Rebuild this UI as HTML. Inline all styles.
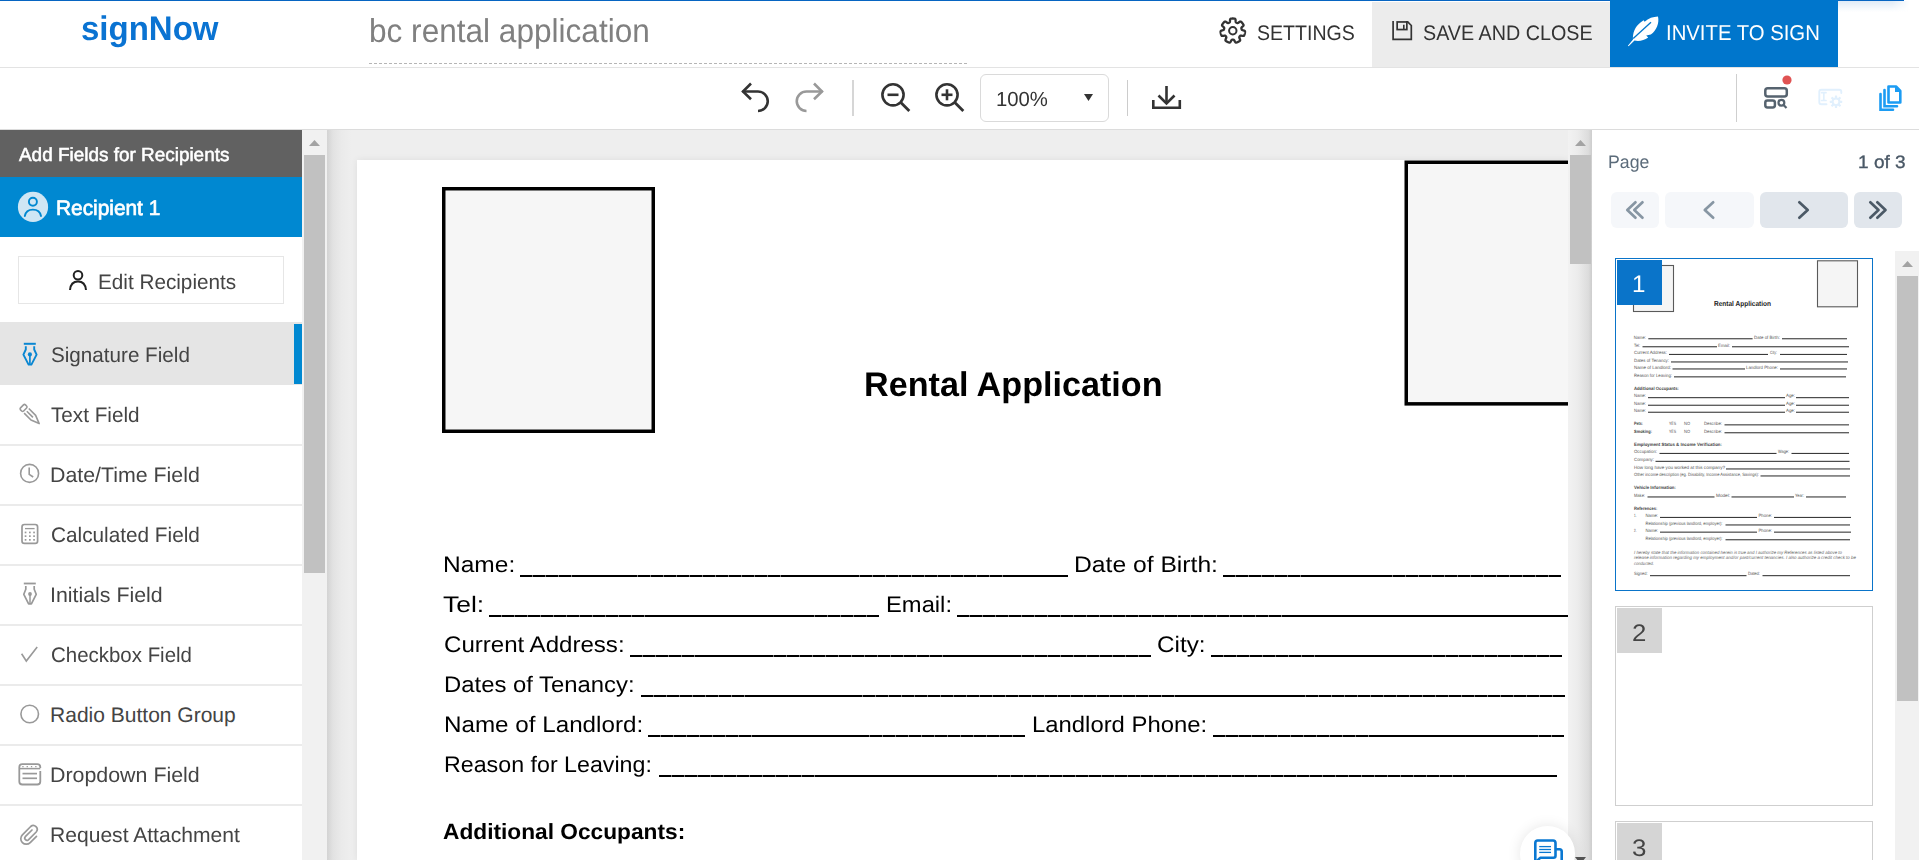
<!DOCTYPE html>
<html><head><meta charset="utf-8"><title>signNow</title>
<style>
html,body{margin:0;padding:0;}
body{width:1919px;height:860px;overflow:hidden;position:relative;background:#fff;font-family:"Liberation Sans",sans-serif;text-rendering:geometricPrecision;}
div,span,svg{position:absolute;box-sizing:border-box;}
.t{white-space:nowrap;transform-origin:0 0;}
.ul{height:1.8px;background:repeating-linear-gradient(to right,#000 0,#000 12.2px,#777 12.2px,#777 13px);}
.sep{left:0;width:302px;height:2px;background:#ebebeb;}
</style></head><body>
<!-- ===== header ===== -->
<div style="left:0;top:0;width:1919px;height:67px;background:#fff"></div>
<div style="left:1838px;top:1px;width:72px;height:11px;background:linear-gradient(#dfebf7,#f1f6fb 55%,rgba(255,255,255,0));-webkit-mask-image:linear-gradient(to right,#000 75%,transparent);"></div>
<div style="left:0;top:0;width:1904px;height:1px;background:#0765c2"></div>
<div style="left:0;top:67px;width:1919px;height:1px;background:#e3e3e3"></div>
<svg style="left:369px;top:62px" width="601" height="3"><line x1="0" y1="1.5" x2="600" y2="1.5" stroke="#b5b5b5" stroke-width="1" stroke-dasharray="3 2"/></svg>
<div style="left:1372px;top:2px;width:238px;height:65px;background:#ececec"></div>
<div style="left:1610px;top:0;width:228px;height:67px;background:#0076cc"></div>
<!-- gear -->
<svg style="left:1219px;top:17px" width="28" height="28" viewBox="0 0 28 28"><path d="M25.61 13.80 L25.89 14.07 L26.00 14.35 L26.04 14.63 L26.04 14.90 L26.02 15.18 L25.99 15.45 L25.95 15.72 L25.90 16.00 L25.85 16.27 L25.79 16.54 L25.73 16.81 L25.66 17.07 L25.58 17.34 L25.50 17.60 L25.40 17.86 L25.30 18.12 L25.18 18.37 L25.03 18.60 L24.81 18.80 L24.44 18.92 L23.85 18.92 L23.07 18.79 L22.35 18.65 L21.84 18.61 L21.53 18.65 L21.31 18.76 L21.15 18.89 L21.01 19.04 L20.88 19.19 L20.76 19.35 L20.63 19.51 L20.52 19.67 L20.40 19.84 L20.31 20.02 L20.25 20.25 L20.28 20.57 L20.43 21.06 L20.73 21.73 L21.03 22.46 L21.16 23.03 L21.13 23.42 L20.98 23.68 L20.78 23.88 L20.57 24.05 L20.34 24.21 L20.11 24.36 L19.87 24.50 L19.63 24.63 L19.38 24.76 L19.14 24.88 L18.89 25.00 L18.63 25.11 L18.38 25.21 L18.12 25.31 L17.86 25.40 L17.60 25.48 L17.33 25.55 L17.05 25.57 L16.75 25.53 L16.43 25.32 L16.06 24.85 L15.68 24.16 L15.34 23.51 L15.06 23.09 L14.82 22.87 L14.61 22.77 L14.40 22.73 L14.20 22.71 L14.00 22.70 L13.80 22.70 L13.60 22.70 L13.40 22.71 L13.20 22.73 L12.99 22.77 L12.78 22.87 L12.54 23.09 L12.26 23.51 L11.92 24.16 L11.54 24.85 L11.17 25.32 L10.85 25.53 L10.55 25.57 L10.27 25.55 L10.00 25.48 L9.74 25.40 L9.48 25.31 L9.22 25.21 L8.97 25.11 L8.71 25.00 L8.46 24.88 L8.22 24.76 L7.97 24.63 L7.73 24.50 L7.49 24.36 L7.26 24.21 L7.03 24.05 L6.82 23.88 L6.62 23.68 L6.47 23.42 L6.44 23.03 L6.57 22.46 L6.87 21.73 L7.17 21.06 L7.32 20.57 L7.35 20.25 L7.29 20.02 L7.20 19.84 L7.08 19.67 L6.97 19.51 L6.84 19.35 L6.72 19.19 L6.59 19.04 L6.45 18.89 L6.29 18.76 L6.07 18.65 L5.76 18.61 L5.25 18.65 L4.53 18.79 L3.75 18.92 L3.16 18.92 L2.79 18.80 L2.57 18.60 L2.42 18.37 L2.30 18.12 L2.20 17.86 L2.10 17.60 L2.02 17.34 L1.94 17.07 L1.87 16.81 L1.81 16.54 L1.75 16.27 L1.70 16.00 L1.65 15.72 L1.61 15.45 L1.58 15.18 L1.56 14.90 L1.56 14.63 L1.60 14.35 L1.71 14.07 L1.99 13.80 L2.53 13.55 L3.28 13.33 L3.99 13.14 L4.47 12.96 L4.73 12.78 L4.88 12.59 L4.96 12.40 L5.03 12.21 L5.08 12.01 L5.12 11.82 L5.17 11.62 L5.20 11.43 L5.23 11.23 L5.24 11.02 L5.19 10.79 L5.03 10.51 L4.68 10.14 L4.12 9.66 L3.53 9.14 L3.16 8.68 L3.03 8.31 L3.04 8.01 L3.13 7.75 L3.25 7.50 L3.39 7.26 L3.54 7.03 L3.69 6.80 L3.85 6.57 L4.01 6.35 L4.18 6.13 L4.36 5.92 L4.54 5.71 L4.72 5.50 L4.91 5.30 L5.11 5.11 L5.31 4.92 L5.53 4.75 L5.76 4.60 L6.05 4.52 L6.44 4.57 L6.97 4.83 L7.61 5.28 L8.20 5.72 L8.64 5.98 L8.95 6.07 L9.18 6.07 L9.39 6.02 L9.57 5.95 L9.76 5.87 L9.94 5.78 L10.12 5.69 L10.30 5.60 L10.47 5.50 L10.64 5.37 L10.79 5.19 L10.90 4.89 L10.97 4.39 L11.00 3.65 L11.04 2.87 L11.17 2.28 L11.37 1.95 L11.62 1.78 L11.88 1.69 L12.15 1.63 L12.42 1.58 L12.70 1.55 L12.97 1.53 L13.25 1.51 L13.52 1.50 L13.80 1.50 L14.08 1.50 L14.35 1.51 L14.63 1.53 L14.90 1.55 L15.18 1.58 L15.45 1.63 L15.72 1.69 L15.98 1.78 L16.23 1.95 L16.43 2.28 L16.56 2.87 L16.60 3.65 L16.63 4.39 L16.70 4.89 L16.81 5.19 L16.96 5.37 L17.13 5.50 L17.30 5.60 L17.48 5.69 L17.66 5.78 L17.84 5.87 L18.03 5.95 L18.21 6.02 L18.42 6.07 L18.65 6.07 L18.96 5.98 L19.40 5.72 L19.99 5.28 L20.63 4.83 L21.16 4.57 L21.55 4.52 L21.84 4.60 L22.07 4.75 L22.29 4.92 L22.49 5.11 L22.69 5.30 L22.88 5.50 L23.06 5.71 L23.24 5.92 L23.42 6.13 L23.59 6.35 L23.75 6.57 L23.91 6.80 L24.06 7.03 L24.21 7.26 L24.35 7.50 L24.47 7.75 L24.56 8.01 L24.57 8.31 L24.44 8.68 L24.07 9.14 L23.48 9.66 L22.92 10.14 L22.57 10.51 L22.41 10.79 L22.36 11.02 L22.37 11.23 L22.40 11.43 L22.43 11.62 L22.48 11.82 L22.52 12.01 L22.57 12.21 L22.64 12.40 L22.72 12.59 L22.87 12.78 L23.13 12.96 L23.61 13.14 L24.32 13.33 L25.07 13.55Z" fill="none" stroke="#333" stroke-width="2.3" stroke-linejoin="round"/><circle cx="13.8" cy="13.8" r="3.7" fill="none" stroke="#333" stroke-width="2"/></svg>
<!-- floppy -->
<svg style="left:1385px;top:14px" width="35" height="34" viewBox="0 0 35 34"><path d="M8.1 7.1 V25.4 H26.3 V11.5 L22.7 7.95 H21" fill="none" stroke="#333" stroke-width="1.7"/><rect x="12.15" y="7.95" width="9.7" height="7.6" fill="none" stroke="#333" stroke-width="1.7"/><line x1="18.8" y1="10.8" x2="18.8" y2="15" stroke="#333" stroke-width="1.6"/></svg>
<!-- feather -->
<svg style="left:1620px;top:10px" width="50" height="40" viewBox="0 0 50 40"><path d="M38 6.5 C39.5 13 36.5 20.5 30.8 24.6 L26.2 25.6 L28.2 27.6 C24 30.8 18.5 31.6 14.5 30.6 L8.6 36.3 L7.9 35.8 L13 29.6 C12.4 23.6 15 16.6 20.5 12.6 L23.6 10.3 L24.6 11.8 C28.6 8.3 33 6.6 38 6.5 Z" fill="#fff"/><path d="M13.2 28.6 L31 12.3" stroke="#0076cc" stroke-width="1.3"/></svg>
<!-- ===== toolbar ===== -->
<div style="left:0;top:129px;width:1919px;height:1px;background:#dcdcdc"></div>
<svg style="left:738px;top:80px" width="90" height="36" viewBox="738 80 90 36"><path d="M742.5 91.5 H758 A9.7 9.7 0 0 1 758 111" fill="none" stroke="#333" stroke-width="2.6"/><path d="M751 83.5 L743 91.5 L751 99.3" fill="none" stroke="#333" stroke-width="2.6"/><path d="M822.5 91.5 H806.5 A9.7 9.7 0 0 0 806.5 111" fill="none" stroke="#999" stroke-width="2.6"/><path d="M814 83.5 L822 91.5 L814 99.3" fill="none" stroke="#999" stroke-width="2.6"/></svg>
<div style="left:852px;top:80px;width:2px;height:36px;background:#d6d6d6"></div>
<svg style="left:876px;top:78px" width="94" height="38" viewBox="876 78 94 38"><circle cx="893" cy="94.8" r="10.6" fill="none" stroke="#333" stroke-width="2.6"/><line x1="887.5" y1="94.8" x2="898.5" y2="94.8" stroke="#333" stroke-width="2.6"/><line x1="900.8" y1="102.6" x2="909.3" y2="111.1" stroke="#333" stroke-width="2.8"/><circle cx="947" cy="94.8" r="10.6" fill="none" stroke="#333" stroke-width="2.6"/><line x1="941.5" y1="94.8" x2="952.5" y2="94.8" stroke="#333" stroke-width="2.6"/><line x1="947" y1="89.3" x2="947" y2="100.3" stroke="#333" stroke-width="2.6"/><line x1="954.8" y1="102.6" x2="963.3" y2="111.1" stroke="#333" stroke-width="2.8"/></svg>
<div style="left:980px;top:74px;width:129px;height:48px;border:1px solid #dadada;border-radius:6px;background:#fff"></div>
<svg style="left:1082px;top:92px" width="14" height="12"><path d="M2 2 H11 L6.5 9 Z" fill="#333"/></svg>
<div style="left:1127px;top:80px;width:1px;height:36px;background:#cccccc"></div>
<svg style="left:1150px;top:84px" width="34" height="27" viewBox="1150 84 34 27"><path d="M1153.3 100 V107.7 H1179.8 V100" fill="none" stroke="#333" stroke-width="2.6"/><line x1="1166.5" y1="86" x2="1166.5" y2="103" stroke="#333" stroke-width="2.6"/><path d="M1158.5 95.5 L1166.5 103.5 L1174.5 95.5" fill="none" stroke="#333" stroke-width="2.6"/></svg>
<div style="left:1736px;top:74px;width:1px;height:48px;background:#cfcfcf"></div>
<svg style="left:1760px;top:74px" width="36" height="38" viewBox="1760 74 36 38"><rect x="1765.3" y="88.3" width="21.5" height="8.2" rx="2.5" fill="none" stroke="#56636f" stroke-width="2.5"/><rect x="1765.3" y="100.4" width="9.6" height="7" rx="2.2" fill="none" stroke="#56636f" stroke-width="2.5"/><circle cx="1781.4" cy="102.7" r="2.9" fill="none" stroke="#56636f" stroke-width="2.2"/><line x1="1783.6" y1="105" x2="1786.5" y2="108" stroke="#56636f" stroke-width="2.2"/><circle cx="1787" cy="80" r="4.6" fill="#e05353"/></svg>
<svg style="left:1812px;top:84px" width="34" height="26" viewBox="1812 84 34 26"><path d="M1826.5 104.2 H1821.3 A2 2 0 0 1 1819.3 102.2 V91.8 A2 2 0 0 1 1821.3 89.8 H1839.3 A2 2 0 0 1 1841.3 91.8 V93" fill="none" stroke="#e1f0fd" stroke-width="1.9" stroke-linecap="round"/><path d="M1821.6 92.7 H1826 M1823.8 92.7 V100.5 M1821.6 100.5 H1826" fill="none" stroke="#e1f0fd" stroke-width="1.7" stroke-linecap="round"/><path d="M1842.30 101.80 L1842.29 102.05 L1842.28 102.29 L1842.24 102.54 L1842.13 102.77 L1841.73 102.94 L1840.85 102.96 L1840.31 103.02 L1840.14 103.14 L1840.05 103.30 L1839.99 103.45 L1839.92 103.61 L1839.88 103.77 L1839.91 103.99 L1840.25 104.40 L1840.85 105.04 L1841.03 105.45 L1840.93 105.69 L1840.79 105.89 L1840.63 106.08 L1840.45 106.25 L1840.28 106.43 L1840.09 106.59 L1839.89 106.73 L1839.65 106.83 L1839.24 106.65 L1838.60 106.05 L1838.19 105.71 L1837.97 105.68 L1837.81 105.72 L1837.65 105.79 L1837.50 105.85 L1837.34 105.94 L1837.22 106.11 L1837.16 106.65 L1837.14 107.53 L1836.97 107.93 L1836.74 108.04 L1836.49 108.08 L1836.25 108.09 L1836.00 108.10 L1835.75 108.09 L1835.51 108.08 L1835.26 108.04 L1835.03 107.93 L1834.86 107.53 L1834.84 106.65 L1834.78 106.11 L1834.66 105.94 L1834.50 105.85 L1834.35 105.79 L1834.19 105.72 L1834.03 105.68 L1833.81 105.71 L1833.40 106.05 L1832.76 106.65 L1832.35 106.83 L1832.11 106.73 L1831.91 106.59 L1831.72 106.43 L1831.55 106.25 L1831.37 106.08 L1831.21 105.89 L1831.07 105.69 L1830.97 105.45 L1831.15 105.04 L1831.75 104.40 L1832.09 103.99 L1832.12 103.77 L1832.08 103.61 L1832.01 103.45 L1831.95 103.30 L1831.86 103.14 L1831.69 103.02 L1831.15 102.96 L1830.27 102.94 L1829.87 102.77 L1829.76 102.54 L1829.72 102.29 L1829.71 102.05 L1829.70 101.80 L1829.71 101.55 L1829.72 101.31 L1829.76 101.06 L1829.87 100.83 L1830.27 100.66 L1831.15 100.64 L1831.69 100.58 L1831.86 100.46 L1831.95 100.30 L1832.01 100.15 L1832.08 99.99 L1832.12 99.83 L1832.09 99.61 L1831.75 99.20 L1831.15 98.56 L1830.97 98.15 L1831.07 97.91 L1831.21 97.71 L1831.37 97.52 L1831.55 97.35 L1831.72 97.17 L1831.91 97.01 L1832.11 96.87 L1832.35 96.77 L1832.76 96.95 L1833.40 97.55 L1833.81 97.89 L1834.03 97.92 L1834.19 97.88 L1834.35 97.81 L1834.50 97.75 L1834.66 97.66 L1834.78 97.49 L1834.84 96.95 L1834.86 96.07 L1835.03 95.67 L1835.26 95.56 L1835.51 95.52 L1835.75 95.51 L1836.00 95.50 L1836.25 95.51 L1836.49 95.52 L1836.74 95.56 L1836.97 95.67 L1837.14 96.07 L1837.16 96.95 L1837.22 97.49 L1837.34 97.66 L1837.50 97.75 L1837.65 97.81 L1837.81 97.88 L1837.97 97.92 L1838.19 97.89 L1838.60 97.55 L1839.24 96.95 L1839.65 96.77 L1839.89 96.87 L1840.09 97.01 L1840.28 97.17 L1840.45 97.35 L1840.63 97.52 L1840.79 97.71 L1840.93 97.91 L1841.03 98.15 L1840.85 98.56 L1840.25 99.20 L1839.91 99.61 L1839.88 99.83 L1839.92 99.99 L1839.99 100.15 L1840.05 100.30 L1840.14 100.46 L1840.31 100.58 L1840.85 100.64 L1841.73 100.66 L1842.13 100.83 L1842.24 101.06 L1842.28 101.31 L1842.29 101.55Z M1838.4 101.8 A2.4 2.4 0 1 0 1833.6 101.8 A2.4 2.4 0 1 0 1838.4 101.8 Z" fill="#e1f0fd" fill-rule="evenodd"/></svg>
<svg style="left:1876px;top:83px" width="28" height="30" viewBox="1876 83 28 30"><path d="M1888.5 86.5 H1896 L1900.3 91 V102.5 H1888.5 Z" fill="none" stroke="#1c9cf3" stroke-width="2.6" stroke-linejoin="round"/><path d="M1895 86.5 V92 H1900.3 Z" fill="#1c9cf3"/><path d="M1884.5 90 V106.2 H1897" fill="none" stroke="#1c9cf3" stroke-width="2.6" stroke-linecap="round"/><path d="M1880.5 94 V109.7 H1893" fill="none" stroke="#1c9cf3" stroke-width="2.6" stroke-linecap="round"/></svg>
<!-- ===== left panel ===== -->
<div style="left:0;top:130px;width:302px;height:47px;background:#616161"></div>
<div style="left:0;top:177px;width:302px;height:60px;background:#0088d1"></div>
<svg style="left:17px;top:191px" width="33" height="33" viewBox="17 191 33 33"><circle cx="33" cy="206.9" r="15.1" fill="#cfe6f4"/><circle cx="32.9" cy="201.7" r="4" fill="none" stroke="#0088d1" stroke-width="1.9"/><path d="M24.8 216 C25.6 211.6 29 209.6 32.9 209.6 C36.8 209.6 40.2 211.6 41 216" fill="none" stroke="#0088d1" stroke-width="1.9" stroke-linecap="round"/></svg>
<div style="left:18px;top:256px;width:266px;height:48px;border:1px solid #e6e6e6;background:#fff"></div>
<svg style="left:66px;top:268px" width="24" height="24" viewBox="66 268 24 24"><circle cx="78" cy="275.2" r="4.3" fill="none" stroke="#222" stroke-width="2"/><path d="M70 290 C70.5 284 74 281.5 78 281.5 C82 281.5 85.5 284 86 290" fill="none" stroke="#222" stroke-width="2"/></svg>
<div style="left:0;top:322px;width:302px;height:63px;background:#e5e5e5"></div>
<div style="left:294px;top:324px;width:8px;height:60px;background:#0088d1"></div>
<div class="sep" style="top:444px"></div>
<div class="sep" style="top:504px"></div>
<div class="sep" style="top:564px"></div>
<div class="sep" style="top:624px"></div>
<div class="sep" style="top:684px"></div>
<div class="sep" style="top:744px"></div>
<div class="sep" style="top:804px"></div>
<!-- nib signature -->
<svg style="left:20px;top:340px" width="20" height="28" viewBox="20 340 20 28"><line x1="23.8" y1="343.8" x2="35.8" y2="343.8" stroke="#0a87d2" stroke-width="2"/><path d="M25.8 346.3 V349.5 L23.4 354.6 L28.6 364.6 H31.4 L36.6 354.6 L34.2 349.5 V346.3" fill="none" stroke="#0a87d2" stroke-width="1.9" stroke-linejoin="round"/><circle cx="29.9" cy="354.4" r="2.1" fill="#0a87d2"/><line x1="29.9" y1="354.5" x2="29.9" y2="364" stroke="#0a87d2" stroke-width="1.7"/></svg>
<!-- pencil -->
<svg style="left:16px;top:400px" width="28" height="28" viewBox="16 400 28 28"><g transform="translate(22 406.4) rotate(45)" fill="none" stroke="#999" stroke-width="1.6" stroke-linejoin="round"><rect x="0" y="-3.5" width="4.4" height="7" rx="1.4"/><path d="M6.3 -3.3 H16 L24.3 0 L16 3.3 H6.3"/><line x1="6.8" y1="0" x2="15.5" y2="0"/></g></svg>
<!-- clock -->
<svg style="left:18px;top:462px" width="24" height="24" viewBox="18 462 24 24"><circle cx="29.6" cy="473.4" r="9" fill="none" stroke="#999" stroke-width="1.6"/><path d="M29.2 467.5 V474.3 L33.2 477" fill="none" stroke="#999" stroke-width="1.6"/></svg>
<!-- calculator -->
<svg style="left:19px;top:521px" width="22" height="26" viewBox="19 521 22 26"><rect x="22" y="524.5" width="15.6" height="18.8" rx="2.4" fill="none" stroke="#999" stroke-width="1.7"/><line x1="25" y1="528.6" x2="34.6" y2="528.6" stroke="#999" stroke-width="1.3"/><g fill="#999"><rect x="24.7" y="531.6" width="1.7" height="1.7"/><rect x="29" y="531.6" width="1.7" height="1.7"/><rect x="33.2" y="531.6" width="1.7" height="1.7"/><rect x="24.7" y="535.3" width="1.7" height="1.7"/><rect x="29" y="535.3" width="1.7" height="1.7"/><rect x="33.2" y="535.3" width="1.7" height="1.7"/><rect x="24.7" y="539" width="1.7" height="1.7"/><rect x="29" y="539" width="1.7" height="1.7"/><rect x="33.2" y="539" width="1.7" height="1.7"/></g></svg>
<!-- nib initials -->
<svg style="left:20px;top:580px" width="20" height="28" viewBox="20 580 20 28"><line x1="23.8" y1="583.5" x2="35.8" y2="583.5" stroke="#999" stroke-width="1.8"/><path d="M25.8 586 V589.3 L23.8 594.3 L28.6 603.8 H31.4 L36.2 594.3 L34.2 589.3 V586" fill="none" stroke="#999" stroke-width="1.7" stroke-linejoin="round"/><circle cx="30" cy="594" r="1.9" fill="#999"/><line x1="30" y1="594" x2="30" y2="603" stroke="#999" stroke-width="1.5"/></svg>
<!-- check -->
<svg style="left:18px;top:643px" width="24" height="22" viewBox="18 643 24 22"><path d="M21.6 653.8 L26.3 661 L37.2 647" fill="none" stroke="#999" stroke-width="1.6"/></svg>
<!-- radio -->
<svg style="left:18px;top:702px" width="24" height="24" viewBox="18 702 24 24"><circle cx="29.7" cy="714" r="8.8" fill="none" stroke="#999" stroke-width="1.6"/></svg>
<!-- dropdown -->
<svg style="left:17px;top:762px" width="26" height="26" viewBox="17 762 26 26"><path d="M40.3 771 V781.5 A3 3 0 0 1 37.3 784.5 H22.3 A3 3 0 0 1 19.3 781.5 V767.2 A3 3 0 0 1 22.3 764.2 H37.3 A3 3 0 0 1 40.3 767.2 V768" fill="none" stroke="#999" stroke-width="1.8"/><line x1="19.5" y1="768.6" x2="40.3" y2="768.6" stroke="#999" stroke-width="1.5"/><line x1="22.3" y1="766.6" x2="38" y2="766.6" stroke="#999" stroke-width="1.2" stroke-dasharray="1.3 3"/><line x1="22.5" y1="773.6" x2="37" y2="773.6" stroke="#999" stroke-width="1.7"/><line x1="22.5" y1="778.3" x2="37" y2="778.3" stroke="#999" stroke-width="1.7"/></svg>
<!-- paperclip -->
<svg style="left:18px;top:821px" width="24" height="26" viewBox="18 821 24 26"><path d="M32 830 L25.3 836.7 A2.2 2.2 0 0 0 28.4 839.8 L36.2 832 A3.9 3.9 0 0 0 30.7 826.5 L22.4 834.8 A5.5 5.5 0 0 0 30.2 842.6 L36.5 836.3" fill="none" stroke="#999" stroke-width="1.7" stroke-linecap="round"/></svg>
<!-- left scrollbar -->
<div style="left:302px;top:130px;width:25px;height:730px;background:#f1f1f1"></div>
<svg style="left:306px;top:136px" width="18" height="14"><path d="M3 10 L8.5 4 L14 10 Z" fill="#a3a3a3"/></svg>
<div style="left:304px;top:155px;width:21px;height:418px;background:#c1c1c1"></div>
<!-- ===== doc area ===== -->
<div style="left:327px;top:130px;width:1241px;height:730px;background:#eeeeee"></div>
<div style="left:327px;top:130px;width:24px;height:730px;background:linear-gradient(to right,#d3d3d3,#e2e2e2 25%,#eaeaea 60%,#eeeeee)"></div>
<div style="left:357px;top:160px;width:1211px;height:700px;background:#fff;box-shadow:0 0 7px rgba(0,0,0,0.07)"></div>
<!-- boxes -->
<svg style="left:440px;top:185px" width="218" height="250" viewBox="440 185 218 250"><rect x="445.5" y="190.5" width="206" height="239" fill="#f6f6f6" stroke="#fff" stroke-width="1"/><rect x="443.75" y="188.75" width="209.5" height="242.5" fill="none" stroke="#000" stroke-width="3.5"/></svg>
<svg style="left:1402px;top:158px" width="166" height="250" viewBox="1402 158 166 250"><rect x="1407.5" y="163.8" width="200" height="239" fill="#f6f6f6" stroke="#fff" stroke-width="1"/><rect x="1406.25" y="162.25" width="210" height="241.6" fill="none" stroke="#000" stroke-width="3.5"/></svg>
<div class="ul" style="left:519.8px;top:575.2px;width:548.0px;background:repeating-linear-gradient(to right,#000 0,#000 12.31px,#777 12.31px,#777 13.06px)"></div>
<div class="ul" style="left:1223px;top:575.2px;width:338.3px;background:repeating-linear-gradient(to right,#000 0,#000 12.29px,#777 12.29px,#777 13.04px)"></div>
<div class="ul" style="left:489px;top:615.2px;width:390.0px;background:repeating-linear-gradient(to right,#000 0,#000 12.27px,#777 12.27px,#777 13.02px)"></div>
<div class="ul" style="left:957px;top:615.2px;width:611.0px;background:repeating-linear-gradient(to right,#000 0,#000 12.26px,#777 12.26px,#777 13.01px)"></div>
<div class="ul" style="left:629.5px;top:655.2px;width:521.3px;background:repeating-linear-gradient(to right,#000 0,#000 12.30px,#777 12.30px,#777 13.05px)"></div>
<div class="ul" style="left:1210.8px;top:655.2px;width:351.2px;background:repeating-linear-gradient(to right,#000 0,#000 12.28px,#777 12.28px,#777 13.03px)"></div>
<div class="ul" style="left:640.5px;top:695.2px;width:924.5px;background:repeating-linear-gradient(to right,#000 0,#000 12.28px,#777 12.28px,#777 13.03px)"></div>
<div class="ul" style="left:648.3px;top:735.2px;width:377.1px;background:repeating-linear-gradient(to right,#000 0,#000 12.28px,#777 12.28px,#777 13.03px)"></div>
<div class="ul" style="left:1212.8px;top:735.2px;width:350.9px;background:repeating-linear-gradient(to right,#000 0,#000 12.27px,#777 12.27px,#777 13.02px)"></div>
<div class="ul" style="left:659px;top:775.2px;width:898.0px;background:repeating-linear-gradient(to right,#000 0,#000 12.27px,#777 12.27px,#777 13.02px)"></div>
<!-- doc scrollbar -->
<div style="left:1568px;top:130px;width:24px;height:730px;background:linear-gradient(to right,#f2f2f2,#ececec 40%,#dcdcdc 85%,#cdcdcd)"></div>
<svg style="left:1572px;top:136px" width="18" height="14"><path d="M3 10 L8.5 4 L14 10 Z" fill="#a3a3a3"/></svg>
<div style="left:1570px;top:155px;width:21px;height:109px;background:#c1c1c1"></div>
<svg style="left:1573px;top:855px" width="16" height="6"><path d="M2 2 H13 L7.5 9 Z" fill="#555"/></svg>
<!-- comment bubble -->
<div style="left:1520px;top:826px;width:55px;height:55px;border-radius:50%;background:#fff;box-shadow:0 0 14px rgba(0,0,0,0.10)"></div>
<svg style="left:1530px;top:836px" width="36" height="26" viewBox="1530 836 36 26"><path d="M1535.3 861 V843 A2.5 2.5 0 0 1 1537.8 840.5 H1553 A2.5 2.5 0 0 1 1555.5 843 V855.8 A2 2 0 0 1 1553.5 857.8 H1540.2 L1537.5 860.5" fill="none" stroke="#0a78d2" stroke-width="2.6" stroke-linejoin="round"/><path d="M1555.5 849.2 H1559.5 A2.2 2.2 0 0 1 1561.7 851.4 V862" fill="none" stroke="#0a78d2" stroke-width="2.6"/><g stroke="#0a78d2" stroke-width="1.3"><line x1="1539.2" y1="846.6" x2="1551" y2="846.6"/><line x1="1539.2" y1="849.5" x2="1551" y2="849.5"/><line x1="1539.2" y1="852.4" x2="1551" y2="852.4"/></g></svg>
<!-- ===== right panel ===== -->
<div style="left:1592px;top:130px;width:327px;height:730px;background:#fff"></div>
<div style="left:1611px;top:192px;width:48px;height:36px;border-radius:6px;background:#f5f7fa"></div>
<div style="left:1665px;top:192px;width:89px;height:36px;border-radius:6px;background:#f5f7fa"></div>
<div style="left:1760px;top:192px;width:88px;height:36px;border-radius:6px;background:#e1e6ec"></div>
<div style="left:1854px;top:192px;width:48px;height:36px;border-radius:6px;background:#e1e6ec"></div>
<svg style="left:1620px;top:196px" width="290" height="28" viewBox="1620 196 290 28"><g fill="none" stroke-width="2.7" stroke-linecap="round" stroke-linejoin="round"><path d="M1635.5 202.3 L1627.3 210 L1635.5 217.7 M1642.5 202.3 L1634.3 210 L1642.5 217.7" stroke="#8796a3"/><path d="M1713.2 202.3 L1704.8 210 L1713.2 217.7" stroke="#8796a3"/><path d="M1799.3 202.3 L1807.7 210 L1799.3 217.7" stroke="#4b5966"/><path d="M1870.3 202.3 L1878.5 210 L1870.3 217.7 M1877.3 202.3 L1885.5 210 L1877.3 217.7" stroke="#4b5966"/></g></svg>
<!-- thumbnails -->
<div style="left:1615px;top:258px;width:258px;height:333px;border:1px solid #0a74c9;background:#fff"></div>
<svg style="left:1616px;top:259px" width="256" height="331" viewBox="1616 259 256 331"><rect x="1633.5" y="265.5" width="40" height="46" fill="#f5f5f5" stroke="#5a5a5a" stroke-width="1.1"/><rect x="1817.5" y="260.8" width="40" height="46" fill="#f5f5f5" stroke="#5a5a5a" stroke-width="1.1"/><text x="1714" y="305.5" font-family="Liberation Sans" font-weight="700" font-size="7.2" fill="#222" textLength="57" lengthAdjust="spacingAndGlyphs">Rental Application</text><g font-family="Liberation Sans" font-size="4.6" fill="#555"><text x="1633.8" y="338.5" font-weight="400" textLength="12.2" lengthAdjust="spacingAndGlyphs">Name:</text><rect x="1648.3" y="338.2" width="104.3" height="1.1" fill="#3a3a3a"/><text x="1754" y="338.5" font-weight="400" textLength="26.0" lengthAdjust="spacingAndGlyphs">Date of Birth:</text><rect x="1782" y="338.2" width="65.0" height="1.1" fill="#3a3a3a"/><text x="1634" y="346.5" font-weight="400" textLength="6.0" lengthAdjust="spacingAndGlyphs">Tel:</text><rect x="1642.5" y="346.2" width="74.5" height="1.1" fill="#3a3a3a"/><text x="1718" y="346.5" font-weight="400" textLength="12.0" lengthAdjust="spacingAndGlyphs">Email:</text><rect x="1732" y="346.2" width="117.0" height="1.1" fill="#3a3a3a"/><text x="1634" y="354.2" font-weight="400" textLength="33.0" lengthAdjust="spacingAndGlyphs">Current Address:</text><rect x="1669" y="353.9" width="99.0" height="1.1" fill="#3a3a3a"/><text x="1770" y="354.2" font-weight="400" textLength="7.0" lengthAdjust="spacingAndGlyphs">City:</text><rect x="1780" y="353.9" width="67.0" height="1.1" fill="#3a3a3a"/><text x="1634" y="361.7" font-weight="400" textLength="35.0" lengthAdjust="spacingAndGlyphs">Dates of Tenancy:</text><rect x="1671" y="361.4" width="177.0" height="1.1" fill="#3a3a3a"/><text x="1634" y="368.7" font-weight="400" textLength="37.0" lengthAdjust="spacingAndGlyphs">Name of Landlord:</text><rect x="1672.5" y="368.4" width="72.5" height="1.1" fill="#3a3a3a"/><text x="1746" y="368.7" font-weight="400" textLength="32.0" lengthAdjust="spacingAndGlyphs">Landlord Phone:</text><rect x="1780" y="368.4" width="67.0" height="1.1" fill="#3a3a3a"/><text x="1634" y="376.6" font-weight="400" textLength="38.0" lengthAdjust="spacingAndGlyphs">Reason for Leaving:</text><rect x="1674" y="376.3" width="172.0" height="1.1" fill="#3a3a3a"/><text x="1634" y="389.8" font-weight="700" fill="#444" textLength="45.0" lengthAdjust="spacingAndGlyphs">Additional Occupants:</text><text x="1634" y="397.4" font-weight="400" textLength="12.0" lengthAdjust="spacingAndGlyphs">Name:</text><rect x="1648" y="397.1" width="137.0" height="1.1" fill="#3a3a3a"/><text x="1786" y="397.4" font-weight="400" textLength="9.0" lengthAdjust="spacingAndGlyphs">Age:</text><rect x="1796" y="397.1" width="53.0" height="1.1" fill="#3a3a3a"/><text x="1634" y="405.0" font-weight="400" textLength="12.0" lengthAdjust="spacingAndGlyphs">Name:</text><rect x="1648" y="404.7" width="137.0" height="1.1" fill="#3a3a3a"/><text x="1786" y="405.0" font-weight="400" textLength="9.0" lengthAdjust="spacingAndGlyphs">Age:</text><rect x="1796" y="404.7" width="53.0" height="1.1" fill="#3a3a3a"/><text x="1634" y="412.0" font-weight="400" textLength="12.0" lengthAdjust="spacingAndGlyphs">Name:</text><rect x="1648" y="411.7" width="137.0" height="1.1" fill="#3a3a3a"/><text x="1786" y="412.0" font-weight="400" textLength="9.0" lengthAdjust="spacingAndGlyphs">Age:</text><rect x="1796" y="411.7" width="53.0" height="1.1" fill="#3a3a3a"/><text x="1634" y="424.6" font-weight="700" fill="#444" textLength="9.0" lengthAdjust="spacingAndGlyphs">Pets:</text><text x="1669" y="424.6" font-weight="400" textLength="7.0" lengthAdjust="spacingAndGlyphs">YES</text><text x="1684" y="424.6" font-weight="400" textLength="6.0" lengthAdjust="spacingAndGlyphs">NO</text><text x="1704" y="424.6" font-weight="400" textLength="18.0" lengthAdjust="spacingAndGlyphs">Describe:</text><rect x="1724.5" y="424.3" width="124.5" height="1.1" fill="#3a3a3a"/><text x="1634" y="432.5" font-weight="700" fill="#444" textLength="18.0" lengthAdjust="spacingAndGlyphs">Smoking:</text><text x="1669" y="432.5" font-weight="400" textLength="7.0" lengthAdjust="spacingAndGlyphs">YES</text><text x="1684" y="432.5" font-weight="400" textLength="6.0" lengthAdjust="spacingAndGlyphs">NO</text><text x="1704" y="432.5" font-weight="400" textLength="18.0" lengthAdjust="spacingAndGlyphs">Describe:</text><rect x="1724.5" y="432.2" width="124.5" height="1.1" fill="#3a3a3a"/><text x="1634" y="445.8" font-weight="700" fill="#444" textLength="88.0" lengthAdjust="spacingAndGlyphs">Employment Status &amp; Income Verification:</text><text x="1634" y="453.2" font-weight="400" textLength="23.0" lengthAdjust="spacingAndGlyphs">Occupation:</text><rect x="1659.5" y="452.9" width="117.0" height="1.1" fill="#3a3a3a"/><text x="1778" y="453.2" font-weight="400" textLength="11.0" lengthAdjust="spacingAndGlyphs">Wage:</text><rect x="1791.5" y="452.9" width="57.5" height="1.1" fill="#3a3a3a"/><text x="1634" y="461.1" font-weight="400" textLength="20.0" lengthAdjust="spacingAndGlyphs">Company:</text><rect x="1655.5" y="460.8" width="194.0" height="1.1" fill="#3a3a3a"/><text x="1634" y="468.7" font-weight="400" textLength="91.0" lengthAdjust="spacingAndGlyphs">How long have you worked at this company?</text><rect x="1726" y="468.4" width="124.0" height="1.1" fill="#3a3a3a"/><text x="1634" y="475.7" font-weight="400" textLength="125.0" lengthAdjust="spacingAndGlyphs">Other income description (eg. Disability, Income Assistance, Savings):</text><rect x="1760.5" y="475.4" width="89.5" height="1.1" fill="#3a3a3a"/><text x="1634" y="489.3" font-weight="700" fill="#444" textLength="42.0" lengthAdjust="spacingAndGlyphs">Vehicle Information:</text><text x="1634" y="496.7" font-weight="400" textLength="11.0" lengthAdjust="spacingAndGlyphs">Make:</text><rect x="1647.5" y="496.4" width="67.0" height="1.1" fill="#3a3a3a"/><text x="1716" y="496.7" font-weight="400" textLength="14.0" lengthAdjust="spacingAndGlyphs">Model:</text><rect x="1731.5" y="496.4" width="62.5" height="1.1" fill="#3a3a3a"/><text x="1795" y="496.7" font-weight="400" textLength="9.0" lengthAdjust="spacingAndGlyphs">Year:</text><rect x="1806" y="496.4" width="40.0" height="1.1" fill="#3a3a3a"/><text x="1634" y="509.9" font-weight="700" fill="#444" textLength="23.5" lengthAdjust="spacingAndGlyphs">References:</text><text x="1634" y="517.2" font-weight="400" textLength="2.5" lengthAdjust="spacingAndGlyphs">1.</text><text x="1645.5" y="517.2" font-weight="400" textLength="12.5" lengthAdjust="spacingAndGlyphs">Name:</text><rect x="1660" y="516.9" width="97.0" height="1.1" fill="#3a3a3a"/><text x="1758.5" y="517.2" font-weight="400" textLength="13.5" lengthAdjust="spacingAndGlyphs">Phone:</text><rect x="1774" y="516.9" width="77.0" height="1.1" fill="#3a3a3a"/><text x="1645.5" y="524.7" font-weight="400" textLength="77.0" lengthAdjust="spacingAndGlyphs">Relationship (previous landlord, employer):</text><rect x="1725.5" y="524.4" width="124.5" height="1.1" fill="#3a3a3a"/><text x="1634" y="531.9" font-weight="400" textLength="2.5" lengthAdjust="spacingAndGlyphs">2.</text><text x="1645.5" y="531.9" font-weight="400" textLength="12.5" lengthAdjust="spacingAndGlyphs">Name:</text><rect x="1660" y="531.6" width="97.0" height="1.1" fill="#3a3a3a"/><text x="1758.5" y="531.9" font-weight="400" textLength="13.5" lengthAdjust="spacingAndGlyphs">Phone:</text><rect x="1774" y="531.6" width="77.0" height="1.1" fill="#3a3a3a"/><text x="1645.5" y="539.5" font-weight="400" textLength="77.0" lengthAdjust="spacingAndGlyphs">Relationship (previous landlord, employer):</text><rect x="1725.5" y="539.2" width="124.5" height="1.1" fill="#3a3a3a"/><text x="1634" y="553.6" font-weight="400" font-style="italic" fill="#666" textLength="208.0" lengthAdjust="spacingAndGlyphs">I hereby state that the information contained herein is true and I authorize my References as listed above to</text><text x="1634" y="559.4" font-weight="400" font-style="italic" fill="#666" textLength="222.0" lengthAdjust="spacingAndGlyphs">release information regarding my employment and/or past/current tenancies.  I also authorize a credit check to be</text><text x="1634" y="565.2" font-weight="400" font-style="italic" fill="#666" textLength="20.0" lengthAdjust="spacingAndGlyphs">conducted.</text><text x="1634" y="575.4" font-weight="400" textLength="13.5" lengthAdjust="spacingAndGlyphs">Signed:</text><rect x="1650" y="575.1" width="96.5" height="1.1" fill="#3a3a3a"/><text x="1748" y="575.4" font-weight="400" textLength="12.0" lengthAdjust="spacingAndGlyphs">Dated:</text><rect x="1762.5" y="575.1" width="87.5" height="1.1" fill="#3a3a3a"/></g></svg>
<div style="left:1617px;top:260px;width:45px;height:45px;background:#0a74c9"></div>
<div style="left:1615px;top:606px;width:258px;height:200px;border:1px solid #cfcfcf;background:#fff"></div>
<div style="left:1617px;top:608px;width:45px;height:45px;background:#d5d5d5"></div>
<div style="left:1615px;top:821px;width:258px;height:60px;border:1px solid #cfcfcf;background:#fff"></div>
<div style="left:1617px;top:823px;width:45px;height:45px;background:#d5d5d5"></div>
<!-- right scrollbar -->
<div style="left:1895px;top:251px;width:24px;height:609px;background:#f1f1f1"></div>
<svg style="left:1899px;top:257px" width="18" height="14"><path d="M3 10 L8.5 4 L14 10 Z" fill="#a3a3a3"/></svg>
<div style="left:1897px;top:276px;width:21px;height:425px;background:#c1c1c1"></div>
<span class="t" style="left:81.20px;top:12.40px;font-size:34px;line-height:34px;color:#0a73d2;font-weight:700;transform:scaleX(0.9707);">signNow</span>
<span class="t" style="left:368.58px;top:13.70px;font-size:33px;line-height:33px;color:#808080;font-weight:400;transform:scaleX(0.9567);">bc rental application</span>
<span class="t" style="left:1256.52px;top:23.10px;font-size:21px;line-height:21px;color:#333;font-weight:400;transform:scaleX(0.9320);">SETTINGS</span>
<span class="t" style="left:1422.52px;top:23.00px;font-size:21px;line-height:21px;color:#333;font-weight:400;transform:scaleX(0.9394);">SAVE AND CLOSE</span>
<span class="t" style="left:1665.68px;top:23.34px;font-size:21.5px;line-height:21.5px;color:#fff;font-weight:400;transform:scaleX(0.9444);">INVITE TO SIGN</span>
<span class="t" style="left:996.27px;top:89.70px;font-size:20.5px;line-height:20.5px;color:#333;font-weight:400;transform:scaleX(0.9903);">100%</span>
<span class="t" style="left:18.57px;top:146.00px;font-size:19px;line-height:19px;color:#fff;font-weight:400;transform:scaleX(0.9961);-webkit-text-stroke:0.55px #fff;">Add Fields for Recipients</span>
<span class="t" style="left:56.15px;top:198.00px;font-size:21px;line-height:21px;color:#fff;font-weight:400;transform:scaleX(0.9923);-webkit-text-stroke:0.7px #fff;">Recipient 1</span>
<span class="t" style="left:98.30px;top:272.30px;font-size:21px;line-height:21px;color:#444;font-weight:400;transform:scaleX(0.9861);">Edit Recipients</span>
<span class="t" style="left:50.83px;top:345.00px;font-size:21px;line-height:21px;color:#444;font-weight:400;transform:scaleX(0.9832);">Signature Field</span>
<span class="t" style="left:51.29px;top:405.00px;font-size:21px;line-height:21px;color:#444;font-weight:400;transform:scaleX(0.9854);">Text Field</span>
<span class="t" style="left:50.05px;top:465.00px;font-size:21px;line-height:21px;color:#444;font-weight:400;transform:scaleX(1.0163);">Date/Time Field</span>
<span class="t" style="left:50.86px;top:525.00px;font-size:21px;line-height:21px;color:#444;font-weight:400;transform:scaleX(0.9887);">Calculated Field</span>
<span class="t" style="left:49.94px;top:585.00px;font-size:21px;line-height:21px;color:#444;font-weight:400;transform:scaleX(1.0167);">Initials Field</span>
<span class="t" style="left:50.86px;top:645.00px;font-size:21px;line-height:21px;color:#444;font-weight:400;transform:scaleX(0.9739);">Checkbox Field</span>
<span class="t" style="left:50.08px;top:705.00px;font-size:21px;line-height:21px;color:#444;font-weight:400;">Radio Button Group</span>
<span class="t" style="left:50.06px;top:765.00px;font-size:21px;line-height:21px;color:#444;font-weight:400;transform:scaleX(1.0181);">Dropdown Field</span>
<span class="t" style="left:50.08px;top:825.00px;font-size:21px;line-height:21px;color:#444;font-weight:400;transform:scaleX(1.0035);">Request Attachment</span>
<span class="t" style="left:864.44px;top:368.00px;font-size:34.3px;line-height:34.3px;color:#000;font-weight:700;transform:scaleX(0.9960);">Rental Application</span>
<span class="t" style="left:443.49px;top:554.00px;font-size:22.4px;line-height:22.4px;color:#000;font-weight:400;transform:scaleX(1.0950);">Name:</span>
<span class="t" style="left:1073.89px;top:554.00px;font-size:22.4px;line-height:22.4px;color:#000;font-weight:400;transform:scaleX(1.1017);">Date of Birth:</span>
<span class="t" style="left:443.17px;top:594.00px;font-size:22.4px;line-height:22.4px;color:#000;font-weight:400;transform:scaleX(1.1817);">Tel:</span>
<span class="t" style="left:886.14px;top:594.00px;font-size:22.4px;line-height:22.4px;color:#000;font-weight:400;transform:scaleX(1.0609);">Email:</span>
<span class="t" style="left:444.22px;top:634.00px;font-size:22.4px;line-height:22.4px;color:#000;font-weight:400;transform:scaleX(1.0748);">Current Address:</span>
<span class="t" style="left:1156.92px;top:634.00px;font-size:22.4px;line-height:22.4px;color:#000;font-weight:400;transform:scaleX(1.0834);">City:</span>
<span class="t" style="left:443.55px;top:674.00px;font-size:22.4px;line-height:22.4px;color:#000;font-weight:400;transform:scaleX(1.0656);">Dates of Tenancy:</span>
<span class="t" style="left:443.52px;top:714.00px;font-size:22.4px;line-height:22.4px;color:#000;font-weight:400;transform:scaleX(1.0811);">Name of Landlord:</span>
<span class="t" style="left:1031.95px;top:714.00px;font-size:22.4px;line-height:22.4px;color:#000;font-weight:400;transform:scaleX(1.0658);">Landlord Phone:</span>
<span class="t" style="left:443.57px;top:754.00px;font-size:22.4px;line-height:22.4px;color:#000;font-weight:400;transform:scaleX(1.0374);">Reason for Leaving:</span>
<span class="t" style="left:443.43px;top:820.60px;font-size:22px;line-height:22px;color:#000;font-weight:700;transform:scaleX(1.0321);">Additional Occupants:</span>
<span class="t" style="left:1608.00px;top:153.04px;font-size:18px;line-height:18px;color:#5b6b7a;font-weight:400;transform:scaleX(0.9828);">Page</span>
<span class="t" style="left:1857.52px;top:153.04px;font-size:18px;line-height:18px;color:#4a5866;font-weight:400;transform:scaleX(1.0577);-webkit-text-stroke:0.35px #4a5866;">1 of 3</span>
<span class="t" style="left:1632.49px;top:273.00px;font-size:24px;line-height:24px;color:#fff;font-weight:400;transform:scaleX(1.0062);">1</span>
<span class="t" style="left:1631.96px;top:621.50px;font-size:24px;line-height:24px;color:#444;font-weight:400;transform:scaleX(1.0742);">2</span>
<span class="t" style="left:1631.91px;top:836.50px;font-size:24px;line-height:24px;color:#444;font-weight:400;transform:scaleX(1.0798);">3</span>
</body></html>
